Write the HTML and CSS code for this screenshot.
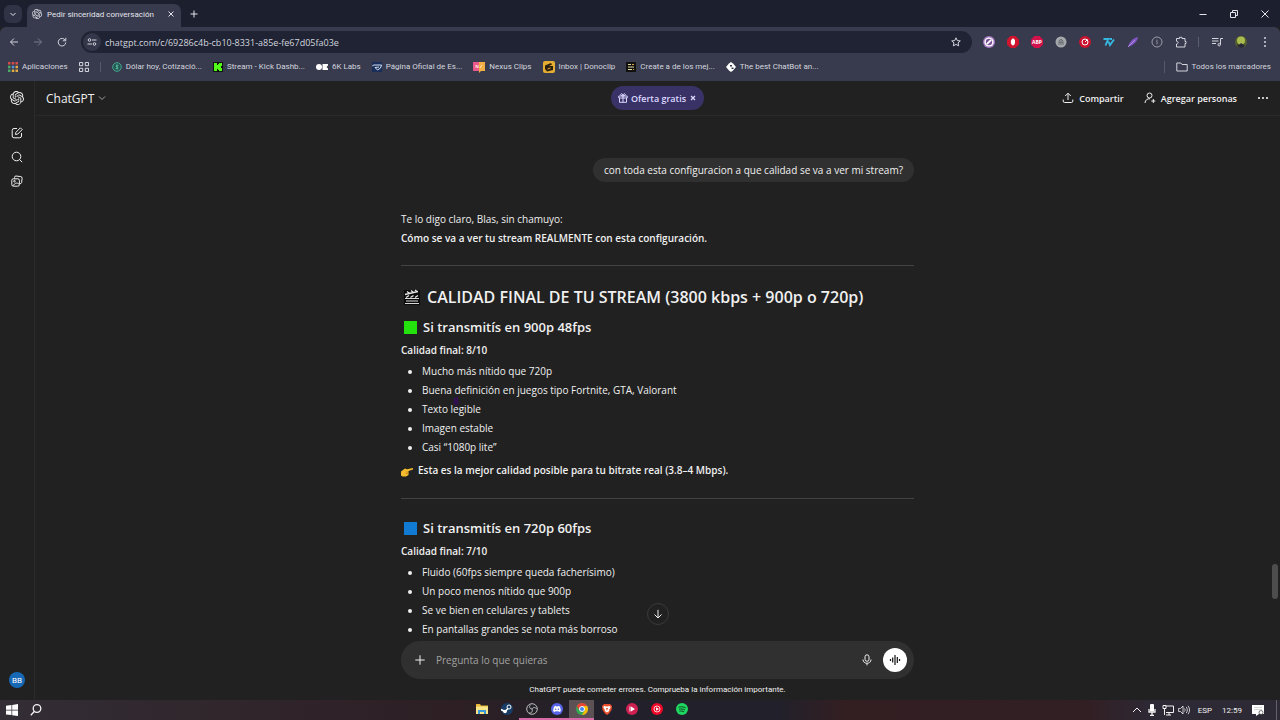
FILE: index.html
```html
<!DOCTYPE html>
<html lang="es">
<head>
<meta charset="UTF-8" />
<meta name="viewport" content="width=device-width, initial-scale=1" />
<title>Pedir sinceridad conversación</title>
<link rel="stylesheet" href="styles.css">
</head>
<body>
<svg class="defs" aria-hidden="true">
  <symbol id="openai" viewBox="0 0 24 24"><path fill="currentColor" d="M22.2819 9.8211a5.9847 5.9847 0 0 0-.5157-4.9108 6.0462 6.0462 0 0 0-6.5098-2.9A6.0651 6.0651 0 0 0 4.9807 4.1818a5.9847 5.9847 0 0 0-3.9977 2.9 6.0462 6.0462 0 0 0 .7427 7.0966 5.98 5.98 0 0 0 .511 4.9107 6.051 6.051 0 0 0 6.5146 2.9001A5.9847 5.9847 0 0 0 13.2599 24a6.0557 6.0557 0 0 0 5.7718-4.2058 5.9894 5.9894 0 0 0 3.9977-2.9001 6.0557 6.0557 0 0 0-.7475-7.0729zm-9.022 12.6081a4.4755 4.4755 0 0 1-2.8764-1.0408l.1419-.0804 4.7783-2.7582a.7948.7948 0 0 0 .3927-.6813v-6.7369l2.02 1.1686a.071.071 0 0 1 .038.052v5.5826a4.504 4.504 0 0 1-4.4945 4.4944zm-9.6607-4.1254a4.4708 4.4708 0 0 1-.5346-3.0137l.142.0852 4.783 2.7582a.7712.7712 0 0 0 .7806 0l5.8428-3.3685v2.3324a.0804.0804 0 0 1-.0332.0615L9.74 19.9502a4.4992 4.4992 0 0 1-6.1408-1.6464zM2.3408 7.8956a4.485 4.485 0 0 1 2.3655-1.9728V11.6a.7664.7664 0 0 0 .3879.6765l5.8144 3.3543-2.0201 1.1685a.0757.0757 0 0 1-.071 0l-4.8303-2.7865A4.504 4.504 0 0 1 2.3408 7.872zm16.5963 3.8558L13.1038 8.364 15.1192 7.2a.0757.0757 0 0 1 .071 0l4.8303 2.7913a4.4944 4.4944 0 0 1-.6765 8.1042v-5.6772a.79.79 0 0 0-.407-.667zm2.0107-3.0231l-.142-.0852-4.7735-2.7818a.7759.7759 0 0 0-.7854 0L9.409 9.2297V6.8974a.0662.0662 0 0 1 .0284-.0615l4.8303-2.7866a4.4992 4.4992 0 0 1 6.6802 4.66zM8.3065 12.863l-2.02-1.1638a.0804.0804 0 0 1-.038-.0567V6.0742a4.4992 4.4992 0 0 1 7.3757-3.4537l-.142.0805L8.704 5.459a.7948.7948 0 0 0-.3927.6813zm1.0976-2.3654l2.602-1.4998 2.6069 1.4998v2.9994l-2.5974 1.4997-2.6067-1.4997Z"/></symbol>
</svg>

<!-- Barra de pestañas -->
<div class="tabstrip">
  <button class="tab-search" aria-label="Buscar pestañas"><svg class="i8" viewBox="0 0 8 8"><path d="M1.5 3 4 5.5 6.500 3"/></svg></button>
  <div class="tab">
    <svg class="i10"><use href="#openai"/></svg>
    <span class="tab-title">Pedir sinceridad conversación</span>
    <button aria-label="Cerrar pestaña"><svg class="i8" viewBox="0 0 8 8"><path d="M1.500 1.500l5 5M6.500 1.500l-5 5"/></svg></button>
  </div>
  <button class="new-tab" aria-label="Nueva pestaña"><svg class="i8" viewBox="0 0 8 8"><path d="M4 .5v7M.5 4h7"/></svg></button>
  <div class="window-buttons">
    <button aria-label="Minimizar"><svg class="i8" viewBox="0 0 8 8"><path d="M.5 4.500h7"/></svg></button>
    <button aria-label="Restaurar"><svg class="i8" viewBox="0 0 8 8"><path d="M.5 2.500h5v5h-5zM2.500 2.500v-2h5v5h-2"/></svg></button>
    <button aria-label="Cerrar"><svg class="i8" viewBox="0 0 8 8"><path d="M.5.5l7 7M7.500.5l-7 7"/></svg></button>
  </div>
</div>

<!-- Barra de direcciones y extensiones -->
<div class="toolbar">
  <button class="cell" aria-label="Atrás"><svg class="i10" viewBox="0 0 10 10"><path d="M9 5H1.500M5 1.500 1.500 5 5 8.500"/></svg></button>
  <button class="cell dim" aria-label="Adelante"><svg class="i10" viewBox="0 0 10 10"><path d="M1 5h7.500M5 1.500 8.500 5 5 8.500"/></svg></button>
  <button class="cell" aria-label="Recargar"><svg class="i10" viewBox="0 0 10 10"><path d="M8.300 3.300A3.800 3.800 0 1 0 8.800 5.500M8.800.8v3H5.800"/></svg></button>
  <div class="address">
    <button class="site-info" aria-label="Información del sitio"><svg class="i10" viewBox="0 0 10 10"><circle cx="2.500" cy="3" r="1.300"/><path d="M5 3h4.500M.5 7H5"/><circle cx="7.500" cy="7" r="1.300"/></svg></button>
    <input class="url" type="text" aria-label="Dirección" value="chatgpt.com/c/69286c4b-cb10-8331-a85e-fe67d05fa03e">
    <button aria-label="Marcar"><svg class="i10" viewBox="0 0 10 10"><path d="M5 .8l1.300 2.800 3 .3-2.300 2 .7 3L5 7.400 2.300 8.900l.7-3-2.300-2 3-.3z"/></svg></button>
  </div>
  <div class="extensions">
    <button class="cell" aria-label="Extensión violeta"><svg class="i12" viewBox="0 0 12 12"><circle class="nos" cx="6" cy="6" r="6" fill="#a779c4"/><circle class="nos" cx="6" cy="6" r="4.600" fill="#fff"/><circle class="nos" cx="6" cy="6" r="3.200" fill="#7c5297"/><path d="M3.800 8.200l4.400-4.400" stroke="#fff" stroke-width="1.800"/></svg></button>
    <button class="cell" aria-label="AdBlock"><svg class="i12" viewBox="0 0 12 12"><path class="nos" fill="#d0142d" d="M3.500 0h5L12 3.500v5L8.500 12h-5L0 8.500v-5z"/><path class="nos" fill="#fff" d="M4 4.500 5 3l1-.8L7 3l1 1v3L7 9.300H5L3.800 7z"/></svg></button>
    <button class="cell" aria-label="Adblock Plus"><svg class="i12" viewBox="0 0 12 12"><path class="nos" fill="#d3114a" d="M3.500 0h5L12 3.500v5L8.500 12h-5L0 8.500v-5z"/><text x="6" y="7.700" class="abp">ABP</text></svg></button>
    <button class="cell" aria-label="Extensión gris"><svg class="i12" viewBox="0 0 12 12"><circle class="nos" cx="6" cy="6" r="5.500" fill="#a5a8ab"/><path d="M4 9V5l2-2 2 2v4M6 4v5M4.300 6.500h3.500" stroke="#676c70"/></svg></button>
    <button class="cell" aria-label="Extensión roja"><svg class="i12" viewBox="0 0 12 12"><circle class="nos" cx="6" cy="6" r="6" fill="#c9132e"/><circle cx="6" cy="6" r="3" stroke="#fff"/><path d="M6 6l2.500-2.500" stroke="#fff"/></svg></button>
    <button class="cell" aria-label="7TV"><svg class="i12" viewBox="0 0 12 12"><path d="M.5 3h4.700L2.500 9.500M5.500 5.500 7 9l4-5.500M6.500 3H9" stroke="#35b8e0" stroke-width="1.900"/></svg></button>
    <button class="cell" aria-label="Extensión pluma"><svg class="i12" viewBox="0 0 12 12"><path class="nos" fill="#8155c2" d="M1 11C2 6 6 2 11 1 10.500 5 7 9 1 11z"/><path d="M1 11l7-7" stroke="#c0a0ea" stroke-width=".7"/></svg></button>
    <button class="cell" aria-label="Extensión moneda"><svg class="i12" viewBox="0 0 12 12"><circle cx="6" cy="6" r="5" stroke="#9b9da8"/><path d="M7 4.300H5.300v1.700h1.400v1.700H5M6 3.500v5" stroke="#777a88" stroke-width=".7"/></svg></button>
    <button class="cell" aria-label="Extensiones"><svg class="i12" viewBox="0 0 12 12"><path d="M1.500 2.500h3V1.300h2.500v1.200h3v3h1v2h-1v3.500h-8.500V8c2.200 0 2.200-2.800 0-2.800z"/></svg></button>
    <span class="divider"></span>
    <button class="cell" aria-label="Control multimedia"><svg class="i12" viewBox="0 0 12 12"><path d="M1 2.500h6.500M1 5h6.500M1 7.500h4M9.500 8.500v-6H12"/><circle cx="8.200" cy="8.700" r="1.200"/></svg></button>
    <button class="cell" aria-label="Perfil"><svg class="i12" viewBox="0 0 12 12"><circle class="nos" cx="6" cy="6" r="6" fill="#56612b"/><circle class="nos" cx="6" cy="4.500" r="4" fill="#a8bc50"/><path class="nos" fill="#28283c" d="M2 8l2 1 2-2 3 2 1-1-1 3-3 1-3-1z"/></svg></button>
    <button class="cell" aria-label="Menú"><svg class="i12 solid" viewBox="0 0 12 12"><circle cx="6" cy="2" r="1"/><circle cx="6" cy="6" r="1"/><circle cx="6" cy="10" r="1"/></svg></button>
  </div>
</div>

<!-- Marcadores -->
<nav class="bookmarks">
  <a href="#"><svg class="i10" viewBox="0 0 10 10"><path class="nos" fill="#d94c49" d="M0 0h2.500v2.500H0zM3.800 0h2.500v2.500H3.800zM7.500 0H10v2.500H7.500z"/><path class="nos" fill="#4faa68" d="M0 3.800h2.500v2.500H0zM0 7.500h2.500V10H0z"/><path class="nos" fill="#5594dc" d="M3.800 3.800h2.500v2.500H3.800z"/><path class="nos" fill="#dfac42" d="M7.500 3.800H10v2.500H7.500zM3.800 7.500h2.500V10H3.800zM7.500 7.500H10V10H7.500z"/></svg><span>Aplicaciones</span></a>
  <a href="#" aria-label="Grupos"><svg class="i10" viewBox="0 0 10 10"><path d="M.5.5h3.200v3.200H.5zM6.300.5h3.200v3.200H6.300zM.5 6.300h3.200v3.200H.5zM6.300 6.300h3.200v3.200H6.300z"/></svg></a>
  <span class="bm-divider"></span>
  <a href="#"><svg class="i10" viewBox="0 0 10 10"><circle cx="5" cy="5" r="4.300" stroke="#4aa894" fill="#24564f"/><path d="M6.500 3.300H4.200v1.600h1.700v1.700H3.600M5 2.500v5" stroke="#58bba5" stroke-width=".8"/></svg><span>Dólar hoy, Cotizació...</span></a>
  <a href="#"><svg class="i10" viewBox="0 0 10 10"><path class="nos" fill="#101510" d="M0 0h10v10H0z"/><path class="nos" fill="#53fc18" d="M1 1h3v2h1V2h1V1h3v3H8v2h1v3H6V8H5V7H4v2H1z"/></svg><span>Stream - Kick Dashb...</span></a>
  <a href="#"><svg class="i12" viewBox="0 0 12 12"><circle class="nos" cx="3" cy="6" r="3" fill="#fff"/><path class="nos" fill="#fff" d="M6.500 3H12v1.500L10.500 6 12 7.500V9H6.500z"/></svg><span>6K Labs</span></a>
  <a href="#"><svg class="i10" viewBox="0 0 10 10"><path class="nos" fill="#192e59" d="M0 0h10v10H0z"/><path d="M.3 3.800 2 3h7.500L8.500 6 5.500 8 3 5.500 7 5" stroke="#d6e3f5"/></svg><span>Página Oficial de Es...</span></a>
  <a href="#"><svg class="i12" viewBox="0 0 12 12"><path class="nos" fill="#e9588b" d="M0 1h6v9H0z"/><path class="nos" fill="#f2ae42" d="M6 1h6v9H8l-2 2z"/><path d="M3 7V4l2 3V4M7 7l2-3" stroke="#fff1df" stroke-width=".8"/></svg><span>Nexus Clips</span></a>
  <a href="#"><svg class="i12" viewBox="0 0 12 12"><rect class="nos" width="12" height="12" rx="2" fill="#e5ad32"/><path class="nos" fill="#2b200d" d="M2 4.500 8 2l1 1.500L6 5h4v4l-6 1.500L2 8z"/><path d="M4.500 8l3-1" stroke="#e5ad32"/></svg><span>Inbox | Donoclip</span></a>
  <a href="#"><svg class="i10" viewBox="0 0 10 10"><path class="nos" fill="#11120f" d="M0 0h10v10H0z"/><path d="M2 2.500h3M2 5h6M2 7.500h4" stroke="#e2d7a3"/><path d="M6 2.500h2M7 7.500h1" stroke="#dca843"/></svg><span>Create a de los mej...</span></a>
  <a href="#"><svg class="i10" viewBox="0 0 10 10"><path class="nos" fill="#fff" d="M3 1.500 5 0l2 1.500L10 5 7 8.500 5 10 3 8.500 0 5z"/><path class="nos" fill="#303347" d="M4 3h2v1.500H4zM5.500 5.500h2V7h-2z"/></svg><span>The best ChatBot an...</span></a>
  <a class="all-bookmarks" href="#"><svg class="i12" viewBox="0 0 12 12"><path d="M.8 2h4l1.200 1.500h5.200V10H.8z"/></svg><span>Todos los marcadores</span></a>
</nav>

<div class="app">
  <aside class="sidebar">
    <button aria-label="ChatGPT"><svg class="i14"><use href="#openai"/></svg></button>
    <button class="side-first" aria-label="Nuevo chat"><svg class="i12" viewBox="0 0 12 12"><path d="M6 1.500H3a1.800 1.800 0 0 0-1.800 1.800V9A1.800 1.800 0 0 0 3 10.800h5.700A1.800 1.800 0 0 0 10.500 9V6"/><path d="M4.500 7.500l.4-2.200 4.500-4.500 1.800 1.800-4.500 4.500z"/></svg></button>
    <button aria-label="Buscar chats"><svg class="i12" viewBox="0 0 12 12"><circle cx="5.500" cy="5.500" r="4.300"/><path d="M8.600 8.600l2.600 2.600"/></svg></button>
    <button aria-label="Biblioteca"><svg class="i12" viewBox="0 0 12 12"><path d="M3.500 3.500V2.500A1.500 1.500 0 0 1 5 1l4.800.6a1.500 1.500 0 0 1 1.300 1.700l-.5 4.200a1.500 1.500 0 0 1-1.500 1.200"/><rect x=".8" y="3.800" width="7.600" height="7.400" rx="1.600"/><circle cx="3.500" cy="6.200" r=".8"/><path d="M2 10.800c2-3 4-3.500 6.200-1.500"/></svg></button>
    <button class="avatar" aria-label="Cuenta">BB</button>
  </aside>

  <main class="main">
    <header class="topbar">
      <button class="model">ChatGPT <svg class="i8" viewBox="0 0 8 8"><path d="M1 2.500l3 3 3-3"/></svg></button>
      <button class="offer"><svg class="i10" viewBox="0 0 10 10"><path d="M.8 3h8.400v2H.8zM1.500 5v4.300h7V5M5 3v6.300M5 3C2.500 3 2 .8 3.500.8S5 3 5 3s0-2.200 1.500-2.200S7.500 3 5 3"/></svg>Oferta gratis<svg class="i8" viewBox="0 0 8 8"><path d="M2 2l4 4M6 2 2 6" stroke-width="1.300"/></svg></button>
      <div class="actions">
        <button><svg class="i12" viewBox="0 0 12 12"><path d="M6 8V1.500M3.200 4 6 1.200 8.800 4M1.200 7.500V9A1.500 1.500 0 0 0 2.700 10.500h6.600A1.500 1.500 0 0 0 10.800 9V7.500"/></svg>Compartir</button>
        <button><svg class="i12" viewBox="0 0 12 12"><circle cx="5.500" cy="3.500" r="2.500"/><path d="M1 11c.3-3 2.200-4.500 5-4.200M9.300 7v4M7.300 9h4"/></svg>Agregar personas</button>
        <button aria-label="Más"><svg class="i12 solid" viewBox="0 0 12 12"><circle cx="2" cy="6" r="1.100"/><circle cx="6" cy="6" r="1.100"/><circle cx="10" cy="6" r="1.100"/></svg></button>
      </div>
    </header>

    <div class="chat">
      <div class="thread">
        <div class="user-msg">con toda esta configuracion a que calidad se va a ver mi stream?</div>
        <article class="answer">
          <p>Te lo digo claro, Blas, sin chamuyo:<br><strong>Cómo se va a ver tu stream REALMENTE con esta configuración.</strong></p>
          <hr>
          <h2><svg class="clapper" viewBox="0 0 16 16"><path class="nos" fill="#0b0b0b" d="M0 1h16v15H0z"/><path d="M1 5.500 14 2.500M3 2.500l2.500 2M7 1.500l2.500 2M11 1l2.500 2M2 8.500l3-2M6.500 8.500l3-2M11 8.500l3-2" stroke="#e5e5e5" stroke-width="1.300"/><path d="M1 9.500h14M2 12h12M1 14.500h14" stroke="#d8d8d8"/></svg>CALIDAD FINAL DE TU STREAM (3800 kbps + 900p o 720p)</h2>
          <h3><span class="square green"></span>Si transmitís en 900p 48fps</h3>
          <p><strong>Calidad final: 8/10</strong></p>
          <ul>
            <li>Mucho más nítido que 720p</li>
            <li>Buena definición en juegos tipo Fortnite, GTA, Valorant</li>
            <li class="hovered">Texto legible<svg class="pointer" viewBox="0 0 8 12"><path class="nos" fill="#30104f" d="M1 3 6 0v5l2 2-3 1v3L2 8z"/></svg></li>
            <li>Imagen estable</li>
            <li>Casi “1080p lite”</li>
          </ul>
          <p class="note"><svg class="i12" viewBox="0 0 12 12"><path class="nos" fill="#f5bd2e" d="M0 6.500 4 3.500l2 .8L12 3v1.500L7.500 6v4L5 11.500H1.500L0 10.500z"/><path d="M4.500 7h3M4.500 8.500h3" stroke="#b77914" stroke-width=".6"/></svg><strong>Esta es la mejor calidad posible para tu bitrate real (3.8–4 Mbps).</strong></p>
          <hr>
          <h3><span class="square blue"></span>Si transmitís en 720p 60fps</h3>
          <p><strong>Calidad final: 7/10</strong></p>
          <ul>
            <li>Fluido (60fps siempre queda facherísimo)</li>
            <li>Un poco menos nítido que 900p</li>
            <li>Se ve bien en celulares y tablets</li>
            <li>En pantallas grandes se nota más borroso</li>
          </ul>
        </article>
      </div>
      <button class="scroll-down" aria-label="Ir al final"><svg class="i10" viewBox="0 0 10 10"><path d="M5 .8v8M1.500 5.500 5 9l3.500-3.500"/></svg></button>
      <div class="scrollbar"></div>
    </div>

    <form class="composer">
      <button type="button" aria-label="Adjuntar"><svg class="i10" viewBox="0 0 10 10"><path d="M5 .3v9.400M.3 5h9.400"/></svg></button>
      <input type="text" aria-label="Mensaje" placeholder="Pregunta lo que quieras">
      <button type="button" aria-label="Dictar"><svg class="i12" viewBox="0 0 12 12"><rect x="4" y=".8" width="4" height="6.500" rx="2"/><path d="M2 5.500c0 5 8 5 8 0M6 9.300v2"/></svg></button>
      <button type="button" class="voice" aria-label="Modo de voz"><svg class="i12" viewBox="0 0 12 12"><path d="M1.500 5v2M3.700 3.500v5M6 1v10M8.300 3v6M10.500 5v2" stroke-width="1.200"/></svg></button>
    </form>
    <p class="disclaimer">ChatGPT puede cometer errores. Comprueba la información importante.</p>
  </main>
</div>

<!-- Barra de tareas -->
<footer class="taskbar">
  <button class="start" aria-label="Inicio"><svg class="i12" viewBox="0 0 12 12"><path class="nos" fill="#fff" d="M0 1.700 5.500 1v4.700H0zM6.200.9 12 0v5.700H6.200zM0 6.400h5.500v4.700L0 10.400zM6.200 6.400H12V12l-5.800-.8z"/></svg></button>
  <button class="start" aria-label="Buscar"><svg class="i12" viewBox="0 0 12 12"><circle cx="7" cy="4.500" r="3.800" stroke-width="1.300"/><path d="M4.300 7.500.8 11.200" stroke-width="1.300"/></svg></button>
  <div class="tasks">
    <button aria-label="Explorador"><svg class="i12" viewBox="0 0 12 12"><path class="nos" fill="#e9b93b" d="M0 1h4l1 1.500h7V10H0z"/><path class="nos" fill="#fbe48a" d="M0 3.500h12V11H0z"/><path class="nos" fill="#3b9bd5" d="M2 11V7h8v4H8V9H4v2z"/></svg></button>
    <button aria-label="Steam"><svg class="i12" viewBox="0 0 12 12"><circle class="nos" cx="6" cy="6" r="6" fill="#173c66"/><circle cx="8" cy="4" r="2" stroke="#fff"/><path d="M0 6.500l4 2 3-3" stroke="#fff" stroke-width="1.600"/><circle class="nos" cx="4" cy="8.500" r="1.800" fill="#fff"/></svg></button>
    <button class="open" aria-label="OBS"><svg class="i12" viewBox="0 0 12 12"><circle cx="6" cy="6" r="5.300" fill="#232329" stroke="#bbb"/><path d="M6 6c-3-.5-3-3-1.500-4M6 6c1.500-2.500 4-1.500 4.500 0M6 6c1 2.500-.5 4.500-3 4" stroke="#bbb"/></svg></button>
    <button class="open" aria-label="Discord"><svg class="i12" viewBox="0 0 12 12"><circle class="nos" cx="6" cy="6" r="6" fill="#5865e8"/><path class="nos" fill="#fff" d="M3.500 3.300 5 3l.4.6h1.200L7 3l1.500.3C9.500 5 10 6.500 9.700 8.200L8 9l-.5-.8h-3L4 9l-1.700-.8C2 6.500 2.500 5 3.500 3.300z"/><circle class="nos" cx="4.600" cy="6.300" r=".8" fill="#5865e8"/><circle class="nos" cx="7.400" cy="6.300" r=".8" fill="#5865e8"/></svg></button>
    <button class="open active" aria-label="Chrome"><svg class="i12" viewBox="0 0 12 12"><circle class="nos" cx="6" cy="6" r="6" fill="#35a853"/><path class="nos" fill="#ea4335" d="M.8 3A6 6 0 0 1 11.200 3H6L3.400 7.500z"/><path class="nos" fill="#fbbc05" d="M11.200 3A6 6 0 0 1 6 12l2.600-4.500L6 3z"/><circle cx="6" cy="6" r="2.500" fill="#4285f4" stroke="#fff"/></svg></button>
    <button aria-label="Brave"><svg class="i12" viewBox="0 0 12 12"><path class="nos" fill="#e84e2c" d="M3 1h6l2 2-.5 4L8 10.500 6 12l-2-1.500L1.500 7 1 3z"/><path class="nos" fill="#fff" d="M3 3l3 .5L9 3l.7 1.500L8 7l.3 1L6 9.500 3.700 8 4 7 2.300 4.500z"/><path class="nos" fill="#e84e2c" d="M5 5h2L6 8z"/></svg></button>
    <button aria-label="Reproductor"><svg class="i12" viewBox="0 0 12 12"><circle class="nos" cx="6" cy="6" r="6" fill="#cf2052"/><path class="nos" fill="#fff" d="M3.500 3.500h1v5h-1zM5 3.500 9 6 5 8.500z"/></svg></button>
    <button aria-label="YouTube Music"><svg class="i12" viewBox="0 0 12 12"><circle class="nos" cx="6" cy="6" r="6" fill="#ee0928"/><circle cx="6" cy="6" r="3" stroke="#fff" stroke-width=".8"/><path class="nos" fill="#fff" d="M5 4.300 8 6 5 7.700z"/></svg></button>
    <button aria-label="Spotify"><svg class="i12" viewBox="0 0 12 12"><circle class="nos" cx="6" cy="6" r="6" fill="#1ed760"/><path d="M2.500 4.200c2.500-.8 5-.5 7.200.6M3 6.300c2-.6 4-.4 6 .6M3.500 8.300c1.500-.5 3.200-.3 4.700.5" stroke="#134a26"/></svg></button>
  </div>
  <div class="tray">
    <button aria-label="Iconos ocultos"><svg class="i10" viewBox="0 0 10 10"><path d="M1 7l4-4 4 4"/></svg></button>
    <button aria-label="Micrófono"><svg class="i12" viewBox="0 0 12 12"><rect class="nos" x="4" y="0" width="4" height="7.500" rx="1" fill="#fff"/><path d="M3 5v3h6V5M6 8v4M4 11.500h4" stroke-width="1.300"/></svg></button>
    <button aria-label="Red"><svg class="i12" viewBox="0 0 12 12"><path d="M3.500 2h8v6.500H4M1 1.500h3v3H1zM2.500 4.500v6.500M4 11h5M7 8.500V11"/></svg></button>
    <button aria-label="Volumen"><svg class="i12" viewBox="0 0 12 12"><path d="M.6 4.500h1.900L5 2v8L2.500 7.500H.6zM6.500 4.500c.8 1 .8 2 0 3M8.200 3c1.500 2 1.500 4 0 6M10 1.800c2 2.800 2 5.600 0 8.400" stroke-width=".8"/></svg></button>
    <span class="lang">ESP</span>
    <time>12:59</time>
    <button class="notes" aria-label="Notificaciones"><svg class="i12" viewBox="0 0 12 12"><path class="nos" fill="#fff" d="M0 1h12v9H7l-3 2v-2H0z"/><path d="M2 3.500h8M2 5.500h8" stroke="#bbb" stroke-width=".6"/><circle cx="9" cy="8.500" r="2" stroke="#555" stroke-width=".8"/></svg></button>
  </div>
</footer>
</body>
</html>
```
FILE: styles.css
```css
* {
  margin: 0; padding: 0; box-sizing: border-box;
}
html, body {
  height: 100%;
}
body {
  display: flex;
  flex-direction: column;
  overflow: hidden;
  background: #212121;
  color: #f0f0f0;
  font-family: "Segoe UI", "Open Sans", "Noto Sans", sans-serif;
  font-size: 10px;
}
button, input {
  font: inherit;
  color: inherit;
  background: none;
  border: 0;
  outline: 0;
}
button {
  display: flex;
  align-items: center;
  justify-content: center;
  white-space: nowrap;
}
a {
  color: inherit;
  text-decoration: none;
}

/* Textos pequeños */
.tab, .bookmarks, .avatar, .disclaimer, .tray {
  font-family: "Segoe UI", Roboto, sans-serif;
  font-size: 8px;
}

/* Iconos */
svg {
  display: block;
  flex: none;
  fill: none;
  stroke: currentColor;
}
svg .nos, symbol path, .solid circle { stroke: none; }
.solid circle { fill: currentColor; }
.defs { position: absolute; width: 0; height: 0; }
.i8 { width: 8px; height: 8px; }
.i10 { width: 10px; height: 10px; }
.i12 { width: 12px; height: 12px; }
.i14 { width: 14px; height: 14px; }
.abp {
  font-size: 5px;
  font-weight: 700;
  text-anchor: middle;
  fill: #fff;
  stroke: none;
}

/* Navegador */
.tabstrip {
  display: flex;
  align-items: center;
  flex: none;
  height: 27px;
  padding: 0 4px;
  background: #1c1f2e;
  color: #e3e4ec;
}
.tab-search {
  width: 18px;
  height: 18px;
  border-radius: 6px;
  background: #303346;
}
.tab {
  display: flex;
  align-items: center;
  align-self: flex-end;
  gap: 5px;
  width: 154px;
  height: 23px;
  margin-left: 5px;
  padding: 0 6px 3px 5px;
  border-radius: 7px 7px 0 0;
  background: #383b4d;
}
.tab-title { flex: 1; white-space: nowrap; }
.new-tab { margin-left: 9px; }
.window-buttons {
  display: flex;
  gap: 23px;
  margin-left: auto;
  padding-right: 7px;
}
.toolbar {
  display: flex;
  align-items: center;
  flex: none;
  height: 30px;
  padding: 0 3px 0 2px;
  background: #383b4d;
  color: #d3d5df;
  border-radius: 6px 6px 0 0;
}
.cell { width: 24px; height: 24px; }
.dim { color: #777a8b; }
.address {
  display: flex;
  align-items: center;
  flex: 1;
  height: 22px;
  margin: 0 5px 0 7px;
  padding: 0 11px 0 2px;
  border-radius: 11px;
  background: #1f2333;
}
.site-info {
  width: 18px;
  height: 18px;
  border-radius: 9px;
  background: #34374a;
}
.url {
  flex: 1;
  min-width: 0;
  margin-left: 4px;
  font-size: 9px;
}
.extensions { display: flex; align-items: center; }
.divider {
  width: 1px;
  height: 10px;
  margin: 0 6px 0 5px;
  background: #5b5e70;
}
.bookmarks {
  display: flex;
  align-items: center;
  gap: 11px;
  flex: none;
  height: 24px;
  padding: 0 9px 5px 8px;
  background: #383b4d;
  color: #d3d5df;
  white-space: nowrap;
}
.bookmarks a { display: flex; align-items: center; gap: 4px; }
.bm-divider { width: 1px; height: 10px; background: #555869; }
.all-bookmarks {
  margin-left: auto;
  padding-left: 11px;
  border-left: 1px solid #555869;
}

/* Aplicación */
.app {
  display: flex;
  flex: 1;
  min-height: 0;
}
.sidebar {
  display: flex;
  flex-direction: column;
  align-items: center;
  gap: 12px;
  width: 35px;
  padding: 10px 0 12px;
  border-right: 1px solid #2b2b2b;
}
.side-first { margin-top: 10px; }
.avatar {
  width: 16px;
  height: 16px;
  margin-top: auto;
  border-radius: 50%;
  background: #1769b5;
  color: #fff;
}
.main {
  display: flex;
  flex-direction: column;
  flex: 1;
  min-width: 0;
}
.topbar {
  display: grid;
  grid-template-columns: 1fr auto 1fr;
  align-items: center;
  height: 35px;
  padding: 0 11px;
  border-bottom: 1px solid #292929;
}
.model {
  justify-self: start;
  gap: 4px;
  font-size: 12px;
}
.model svg { color: #a0a0a0; }
.offer {
  gap: 3px;
  height: 24px;
  padding: 0 7px;
  border-radius: 12px;
  background: #393266;
  color: #dcd8ff;
  font-size: 9px;
  font-weight: 600;
}
.actions {
  display: flex;
  justify-self: end;
  gap: 20px;
  font-size: 9px;
  font-weight: 600;
}
.actions button { gap: 5px; }
.chat {
  position: relative;
  flex: 1;
  min-height: 0;
  overflow: hidden;
}
.thread, .composer {
  width: 100%;
  max-width: 513px;
  margin: 0 auto;
}
.thread {
  display: flex;
  flex-direction: column;
  padding-top: 42px;
  line-height: 19px;
}
.user-msg {
  align-self: flex-end;
  padding: 3px 11px 2px;
  border-radius: 12px;
  background: #303030;
}
.answer { margin-top: 28px; }
strong { font-weight: 600; }
hr {
  margin: 17px 0 19px;
  border: 0;
  border-top: 1px solid #424242;
}
h2, h3 {
  display: flex;
  align-items: center;
  padding-left: 3px;
  font-weight: 600;
}
h2 {
  gap: 7px;
  margin-bottom: 8px;
  font-size: 16px;
  line-height: 24px;
}
h3 {
  gap: 6px;
  margin-bottom: 4px;
  font-size: 13px;
  line-height: 20px;
}
.clapper { width: 16px; height: 16px; }
.square { width: 13px; height: 13px; }
.green { background: #24e20d; }
.blue { background: #117bd3; }
ul {
  margin: 2px 0 4px;
  padding-left: 21px;
}
.hovered { position: relative; }
.pointer {
  position: absolute;
  left: 30px;
  top: -4px;
  width: 8px;
  height: 12px;
}
.note {
  display: flex;
  align-items: center;
  gap: 5px;
  margin-bottom: 18px;
}
.scroll-down {
  position: absolute;
  left: 50%;
  bottom: 16px;
  width: 22px;
  height: 22px;
  margin-left: -11px;
  border: 1px solid #3a3a3a;
  border-radius: 50%;
  background: #212121;
}
.scrollbar {
  position: absolute;
  right: 2px;
  bottom: 42px;
  width: 6px;
  height: 35px;
  border-radius: 3px;
  background: #4d4d4d;
}
.composer {
  display: flex;
  align-items: center;
  height: 38px;
  padding: 0 7px 0 14px;
  border-radius: 19px;
  background: #303030;
}
.composer input {
  flex: 1;
  min-width: 0;
  margin-left: 11px;
}
.composer input::placeholder { color: #a2a2a2; opacity: 1; }
.voice {
  width: 24px;
  height: 24px;
  margin-left: 10px;
  border-radius: 50%;
  background: #fff;
  color: #111;
}
.disclaimer {
  line-height: 21px;
  text-align: center;
}

/* Barra de tareas */
.taskbar {
  display: flex;
  align-items: center;
  flex: none;
  height: 20px;
  padding-right: 3px;
  background: linear-gradient(90deg, #332d35 0, #30252b 20%, #2d1f24 36%, #22202a 46%, #22202a 61%, #331f22 66%, #321f24 85%, #2d2935 90%);
  color: #f2f2f2;
}
.start { width: 24px; height: 20px; }
.tasks {
  display: flex;
  margin-left: 33%;
}
.tasks button {
  width: 25px;
  height: 20px;
  border-bottom: 2px solid transparent;
}
.tasks .open { border-color: #d96aa8; }
.tasks .active { background: #5c5155; }
.tray {
  display: flex;
  align-items: center;
  gap: 4px;
  height: 20px;
  margin-left: auto;
  padding-right: 12px;
  border-right: 1px solid #65616b;
}
.lang { margin-left: 4px; }
.tray time { margin-left: 6px; }
.notes { margin-left: 6px; }
```
